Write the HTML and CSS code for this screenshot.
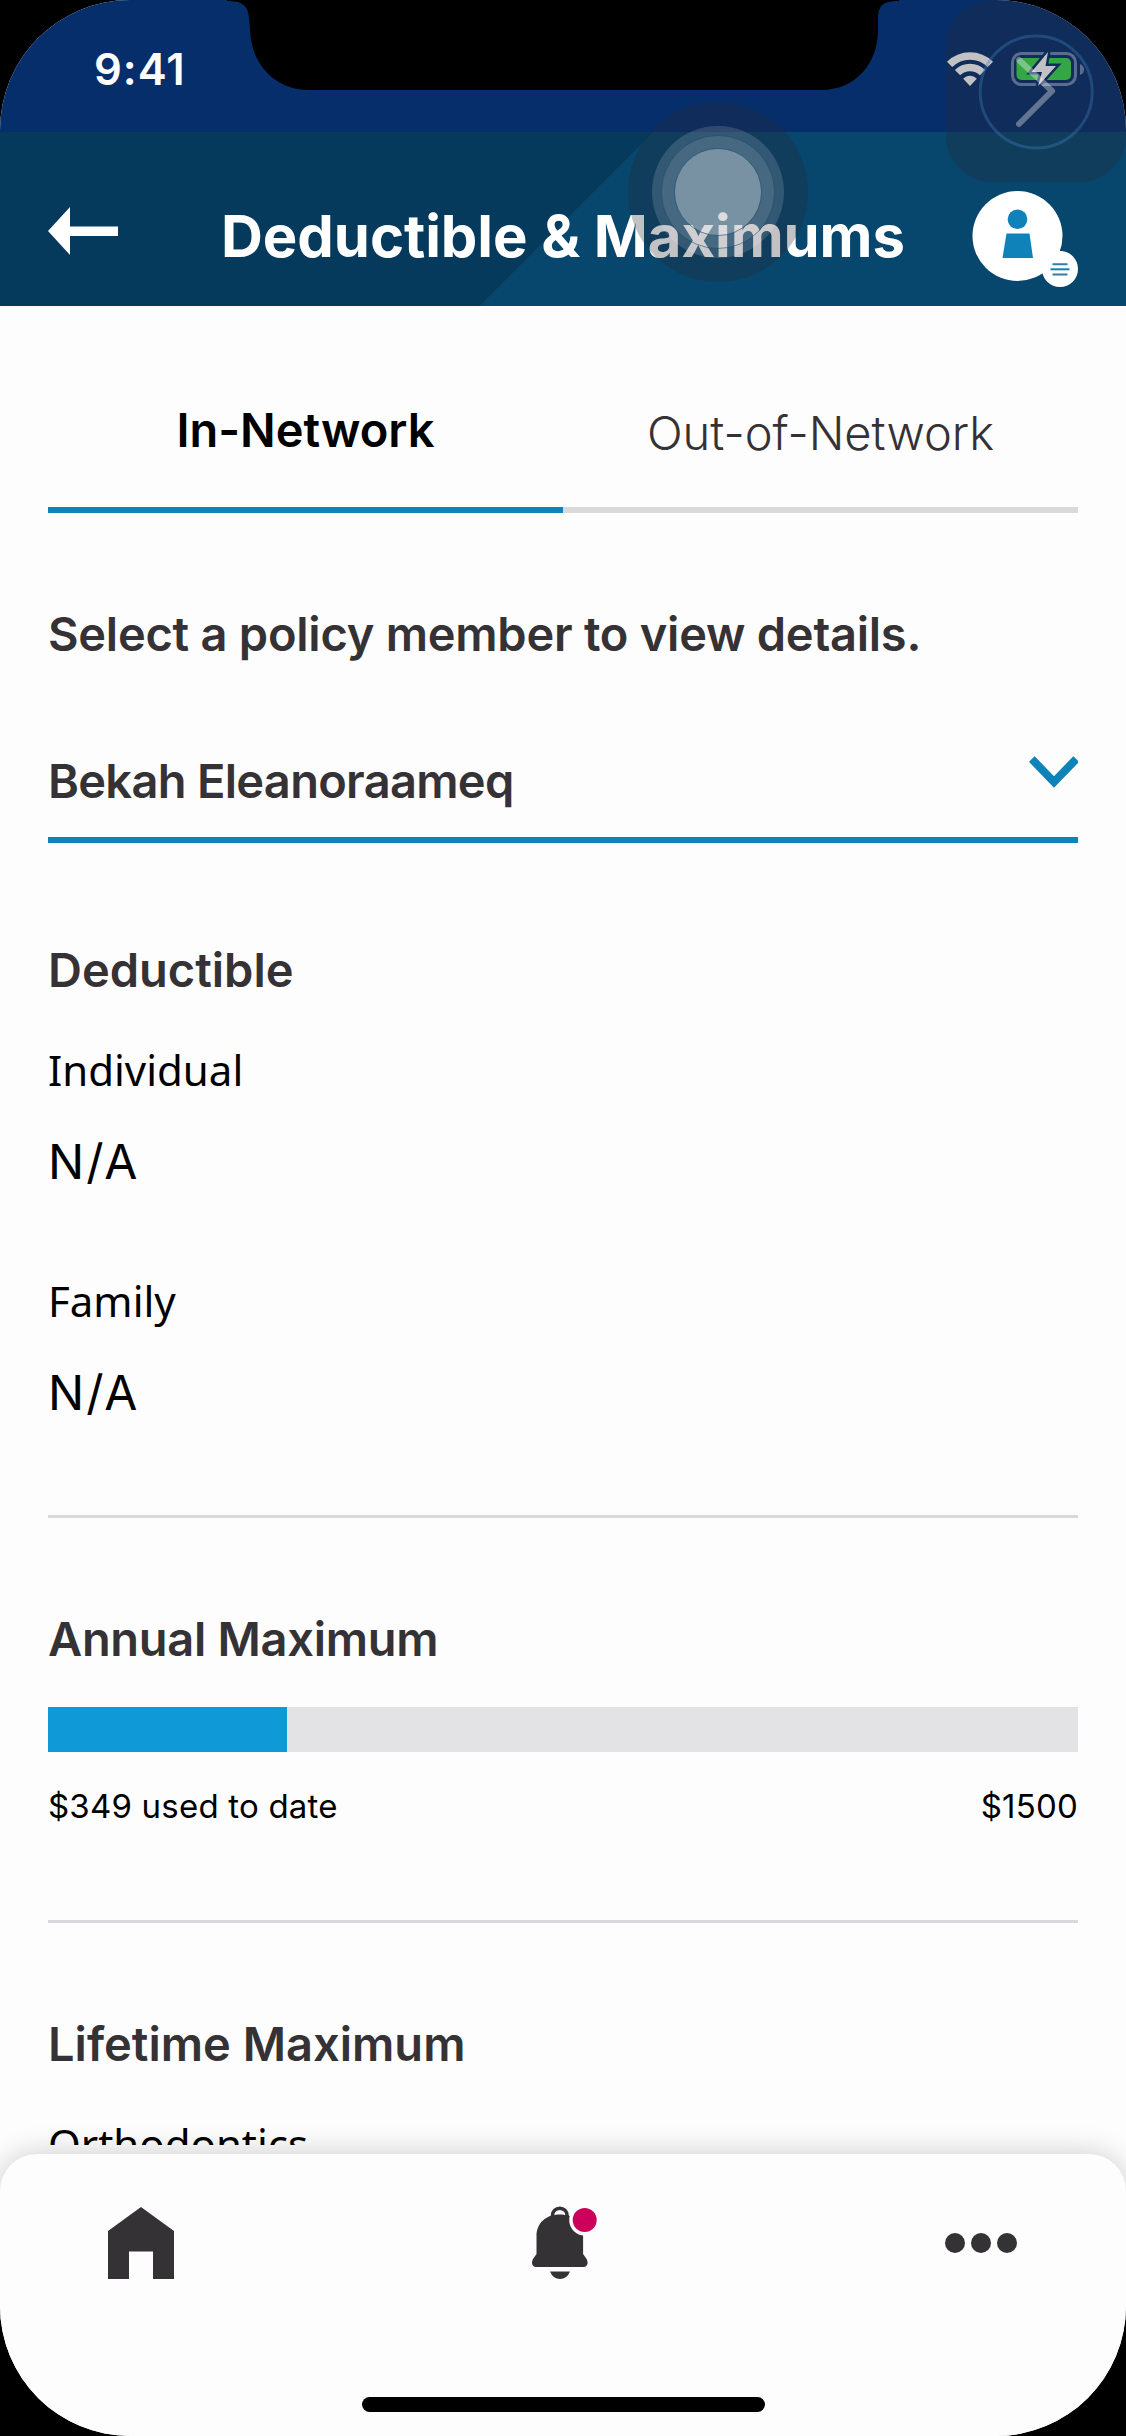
FILE: index.html
```
<!DOCTYPE html>
<html lang="en">
<head>
<meta charset="utf-8">
<title>Deductible &amp; Maximums</title>
<link rel="stylesheet" href="styles.css">
</head>
<body>
<div class="phone">
  <div class="status-bar">
    <span class="time">9:41</span>
    <div class="status-icons">
      <svg class="wifi" width="46" height="34" viewBox="0 0 46 34">
        <g fill="none" stroke="#fff" stroke-width="7.5">
          <path d="M2.6 12.4C14 1.1 32 1.1 43.4 12.4"/>
          <path d="M10.5 20.6C17.5 13.8 28.500 13.800 35.500 20.600"/>
        </g>
        <path d="M16.200 26.800C20.200 22.800 25.800 22.800 29.800 26.800L23 34z" fill="#fff"/>
      </svg>
      <svg class="battery" width="74" height="36" viewBox="0 0 74 36">
        <rect x="1.500" y="2.500" width="63" height="31" rx="9" fill="none" stroke="#6f88b4" stroke-width="3"/>
        <rect x="5.500" y="7" width="54.500" height="22" rx="5" fill="#38d94c"/>
        <path d="M69 13Q73 14.500 73 18.500T69 24z" fill="#6f88b4"/>
        <path d="M37 1L20.500 21H31L27 35L45 15H34.500z" fill="#fff" stroke="#052e6a" stroke-width="5" paint-order="stroke"/>
      </svg>
    </div>
  </div>

  <header class="header">
    <svg class="back" width="70" height="48" viewBox="0 0 70 48"><path d="M0 24L22 0V19.500H70V29H22V48z" fill="#fff"/></svg>
    <h1>Deductible &amp; Maximums</h1>
    <svg class="avatar" width="106" height="97" viewBox="0 0 106 97">
      <circle cx="45.500" cy="45" r="45" fill="#fff"/>
      <circle cx="45.500" cy="28.200" r="9.800" fill="#0f82b9"/>
      <path d="M34.500 42.500H57.500L61 67H30.500z" fill="#0f82b9"/>
      <circle cx="88" cy="78" r="18" fill="#fff"/>
      <path d="M80.500 73.200H95.500M80.500 83.400H95.500" stroke="#2f7fa6" stroke-width="2"/>
      <path d="M78.500 78.300H97.500" stroke="#0f82b9" stroke-width="2"/>
    </svg>
  </header>

  <main class="content">
    <nav class="tabs">
      <div class="tab tab-active">In-Network</div>
      <div class="tab">Out-of-Network</div>
    </nav>
    <p class="prompt">Select a policy member to view details.</p>
    <div class="select">
      <span>Bekah Eleanoraameq</span>
      <svg class="chevron" width="49" height="32" viewBox="0 0 49 32"><path d="M2.800 3L25 26L47.200 3" fill="none" stroke="#0f82b9" stroke-width="8"/></svg>
    </div>

    <section class="deductible">
      <h2>Deductible</h2>
      <dl>
        <dt>Individual</dt>
        <dd>N/A</dd>
        <dt>Family</dt>
        <dd>N/A</dd>
      </dl>
    </section>

    <section class="annual">
      <h2>Annual Maximum</h2>
      <div class="meter"><div class="meter-fill" style="width:23.2%"></div></div>
      <div class="amounts"><span>$349 used to date</span><span class="limit">$1500</span></div>
    </section>

    <section class="lifetime">
      <h2>Lifetime Maximum</h2>
      <p class="label">Orthodontics</p>
    </section>
  </main>

  <footer class="tab-bar">
    <div class="tab-icons">
      <svg width="66" height="72" viewBox="0 0 66 72"><path d="M33 0L66 24V72H45V44.500H21V72H0V24z" fill="#353236"/></svg>
      <svg class="bell" width="66" height="73" viewBox="0 0 66 73">
        <path d="M20.500 14V9.500a7.300 7.300 0 0 1 14.600 0V14" fill="none" stroke="#353236" stroke-width="3.500"/>
        <path d="M27.800 8.500C14 8.500 4.500 17 4.500 30V48L1 53C-1.500 58 1 61 4 61H51.600C54.600 61 57.100 58 54.600 53L51.100 48V30C51.100 17 41.600 8.500 27.800 8.500z" fill="#353236"/>
        <path d="M18 65.500H38Q35 73 28 73T18 65.500z" fill="#353236"/>
        <circle cx="52.700" cy="14" r="15.500" fill="#fefdfe"/>
        <circle cx="52.700" cy="14" r="12" fill="#cc005c"/>
      </svg>
      <svg class="more" width="72" height="20" viewBox="0 0 72 20" fill="#353236"><circle cx="10" cy="10" r="10"/><circle cx="36" cy="10" r="10"/><circle cx="62" cy="10" r="10"/></svg>
    </div>
    <div class="home-indicator"></div>
  </footer>

  <svg class="notch" width="650" height="90" viewBox="0 0 650 90"><path d="M0 0H650V1C634 1 629 5 629 20V30C629 64 606 90 572 90H60C26 90 2 64 1 30L0 18C-1 5 -7 1 -22 1V0z"/></svg>

  <svg class="corner-overlay" width="180" height="182" viewBox="0 0 180 182">
    <rect width="180" height="182" rx="46" fill="#2c2a33" fill-opacity=".29"/>
    <circle cx="90.200" cy="92" r="56" fill="none" stroke="#4082be" stroke-opacity=".35" stroke-width="3"/>
    <path d="M73 60L106 91L73 124" fill="none" stroke="#fff" stroke-opacity=".35" stroke-width="6" stroke-linecap="round" stroke-linejoin="round"/>
  </svg>

  <svg class="assist" width="180" height="180" viewBox="0 0 180 180">
    <circle cx="90" cy="90" r="90" fill="#2c2a33" fill-opacity=".29"/>
    <circle cx="90" cy="90" r="66" fill="#fff" fill-opacity=".14"/>
    <circle cx="90" cy="90" r="56.500" fill="#fff" fill-opacity=".1" stroke="#17486a" stroke-opacity=".55" stroke-width="1"/>
    <circle cx="90" cy="90" r="43.500" fill="#fff" fill-opacity=".27" stroke="#17486a" stroke-opacity=".6" stroke-width="1"/>
  </svg>
</div>
</body>
</html>
```
FILE: styles.css
```
* { box-sizing: border-box; margin: 0; padding: 0; }

body {
  background: #000;
  font-family: Inter, "Liberation Sans", sans-serif;
  color: #353236;
}

.phone {
  position: relative;
  width: 1126px;
  height: 2436px;
  overflow: hidden;
  border-radius: 130px;
  background: #fefdfe;
  display: flex;
  flex-direction: column;
}

/* Status bar and header */
.status-bar {
  height: 132px;
  padding: 43px 41px 0 94px;
  display: flex;
  justify-content: space-between;
  background: #052e6a;
}
.time { font-size: 43.500px; font-weight: 600; line-height: 52px; letter-spacing: 1px; color: #fff; }
.status-icons { display: flex; gap: 18px; padding-top: 8px; }
.wifi { margin-top: 1px; }

.header {
  height: 174px;
  padding: 0 18px 0 48px;
  display: flex;
  align-items: flex-start;
  background: linear-gradient(135deg, #053a5c 0 var(--fold), #07466d var(--fold));
  --fold: 50.250%;
}
.back { margin-top: 75px; }
h1 {
  margin: 69px 0 0 103px;
  width: 751px;
  font-size: 58px;
  font-weight: 700;
  line-height: 70px;
  letter-spacing: -.050px;
  white-space: nowrap;
  color: #fff;
}
.avatar { margin-top: 59px; flex: none; }

/* Page content */
.content {
  position: relative;
  z-index: 1;
  height: 1839px;
  padding: 0 48px;
  overflow: hidden;
}
.tabs { display: flex; height: 207px; }
.tab {
  flex: 1;
  padding-top: 99px;
  border-bottom: 6px solid #d9d9d9;
  text-align: center;
  font-size: 47px;
  font-weight: 300;
  line-height: 56px;
}
.tab-active { padding-top: 96px; border-color: #0f82b9; font-weight: 600; color: #000; }

.prompt {
  margin-top: 93px;
  font-size: 47px;
  font-weight: 600;
  line-height: 56px;
  letter-spacing: -.250px;
}
.select {
  margin-top: 91px;
  padding-bottom: 28px;
  border-bottom: 6px solid #0f82b9;
  display: flex;
  justify-content: space-between;
  font-size: 47px;
  font-weight: 600;
  line-height: 56px;
  letter-spacing: -.700px;
}
.chevron { margin-top: 3px; }

h2 { font-size: 47px; font-weight: 600; line-height: 56px; }
.deductible { padding: 99px 0 94px; }
dt, .label {
  margin-top: 44px;
  font-family: "Noto Sans", sans-serif;
  font-size: 42px;
  line-height: 56px;
  color: #000;
}
dd { margin-top: 36px; font-size: 48px; line-height: 56px; letter-spacing: 2px; color: #000; }
dd + dt { margin-top: 83px; }

.annual, .lifetime { padding-top: 93px; border-top: 3px solid #d9d9db; }
.annual { padding-bottom: 92px; }
.annual h2 { letter-spacing: -.300px; }
.meter { margin-top: 40px; height: 45px; background: #e3e2e4; }
.meter-fill { height: 100%; background: #0f99d6; }
.amounts {
  margin-top: 32px;
  display: flex;
  justify-content: space-between;
  font-size: 33px;
  line-height: 44px;
  letter-spacing: .200px;
  color: #000;
}

/* Bottom tab bar */
.tab-bar {
  margin-top: 9px;
  height: 282px;
  padding-top: 52px;
  border-radius: 37px 37px 0 0;
  background: #fefdfe;
  box-shadow: 0 0 30px rgba(0, 0, 0, .2);
}
.tab-icons {
  height: 73px;
  padding: 0 108px;
  display: grid;
  grid-template-columns: 424px 1fr auto;
}
.tab-icons svg { display: block; }
.tab-icons svg:first-child { margin-top: 1px; }
.tab-icons .more { margin: 26.500px 1px 0 0; }
.home-indicator { margin: 118px auto 0; width: 403px; height: 15px; border-radius: 8px; background: #000; }

/* Floating layers */
.notch { position: absolute; z-index: 2; left: 249px; top: 0; overflow: visible; }
.corner-overlay { position: absolute; z-index: 2; left: 946px; top: 0; }
.assist { position: absolute; z-index: 2; left: 628px; top: 102px; }
```
